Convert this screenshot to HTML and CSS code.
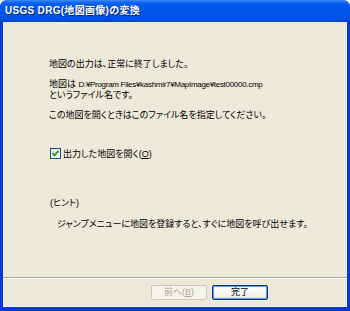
FILE: index.html
```html
<!DOCTYPE html>
<html lang="ja">
<head>
  <meta charset="UTF-8">
  <title>USGS DRG(地図画像)の変換</title>
  <link rel="stylesheet" href="styles.css">
</head>
<body>
<div class="window">
  <div class="titlebar">USGS DRG(地図画像)の変換</div>
  <div class="client">
    <div class="content">
      <p class="msg">地図の出力は、正常に終了しました。</p>
      <p class="msg">地図は <span class="path">D:¥Program Files¥kashmir7¥MapImage¥test00000.cmp</span><br>というファイル名です。</p>
      <p class="msg">この地図を開くときはこのファイル名を指定してください。</p>

      <label class="check">
        <span class="box">
          <svg width="9" height="9" viewBox="0 0 9 9"><path d="M1.5 4.2 L3.5 6.3 L7.5 1.8" fill="none" stroke="#21A121" stroke-width="1.8"/></svg>
        </span>
        <span>出力した地図を開く(<u>O</u>)</span>
      </label>

      <p class="hint-title">(ヒント)</p>
      <p class="hint">ジャンプメニューに地図を登録すると、すぐに地図を呼び出せます。</p>
    </div>
    <div class="buttons">
      <button class="btn disabled" disabled>前へ(<u>B</u>)</button>
      <button class="btn default">完了</button>
    </div>
  </div>
</div>
</body>
</html>
```

FILE: styles.css
```css
body {
  margin: 0;
  background: #ffffff;
  font-family: "Liberation Sans", "Noto Sans CJK JP", sans-serif;
}
.window {
  width: 350px;
  height: 311px;
  box-sizing: border-box;
  display: flex;
  flex-direction: column;
  background: #0838d8;
  border-radius: 7px 7px 0 0;
  overflow: hidden;
}
.titlebar {
  height: 22px;
  flex: none;
  box-sizing: border-box;
  padding: 3px 0 0 5px;
  color: #ffffff;
  font-weight: bold;
  font-size: 10px;
  line-height: 16px;
  letter-spacing: 0.3px;
  text-shadow: 1px 1px 0 #0a1c6e;
  background: linear-gradient(#3d8bf7 0px, #0862f2 3px, #0058ec 6px, #0056e6 14px, #0152dc 19px, #003fc6 22px);
}
.client {
  flex: 1;
  margin: 0 3px 4px 3px;
  display: flex;
  flex-direction: column;
  background: #ece9d8;
  border-bottom: 1px solid #f4f3ec;
}
.content {
  flex: 1;
  padding: 37px 0 0 46px;
  font-size: 9px;
  line-height: 10px;
  color: #000000;
  font-feature-settings: "palt";
  border-bottom: 1px solid #aca899;
}
.msg {
  margin: 0 0 10px 0;
}
.path {
  font-size: 8px;
  letter-spacing: -0.3px;
}
.check {
  display: flex;
  align-items: center;
  gap: 2px;
  margin: 28px 0 0 1px;
}
.box {
  width: 11px;
  height: 11px;
  box-sizing: border-box;
  border: 1px solid #1c5180;
  background: linear-gradient(135deg, #dcdcd7, #ffffff);
  display: flex;
  align-items: center;
  justify-content: center;
}
.hint-title {
  margin: 39px 0 0 1px;
}
.hint {
  margin: 11px 0 0 8px;
}
.buttons {
  flex: none;
  height: 28px;
  border-top: 1px solid #ffffff;
  display: flex;
  justify-content: flex-end;
  align-items: flex-start;
  gap: 5px;
  padding: 6px 79px 0 0;
  box-sizing: border-box;
}
.btn {
  width: 56px;
  height: 15px;
  padding: 0;
  font-family: "Liberation Sans", "Noto Sans CJK JP", sans-serif;
  font-size: 9px;
  line-height: 11px;
  font-feature-settings: "palt";
  border-radius: 2px;
}
.disabled {
  border: 1px solid #c9c7ba;
  background: #f5f4ea;
  color: #aca899;
}
.default {
  border: 1px solid #003c74;
  background: linear-gradient(#ffffff, #f0f0ea 80%, #d6d0c5);
  box-shadow: inset 0 0 0 1px #6e94e0;
  color: #000000;
}
```
